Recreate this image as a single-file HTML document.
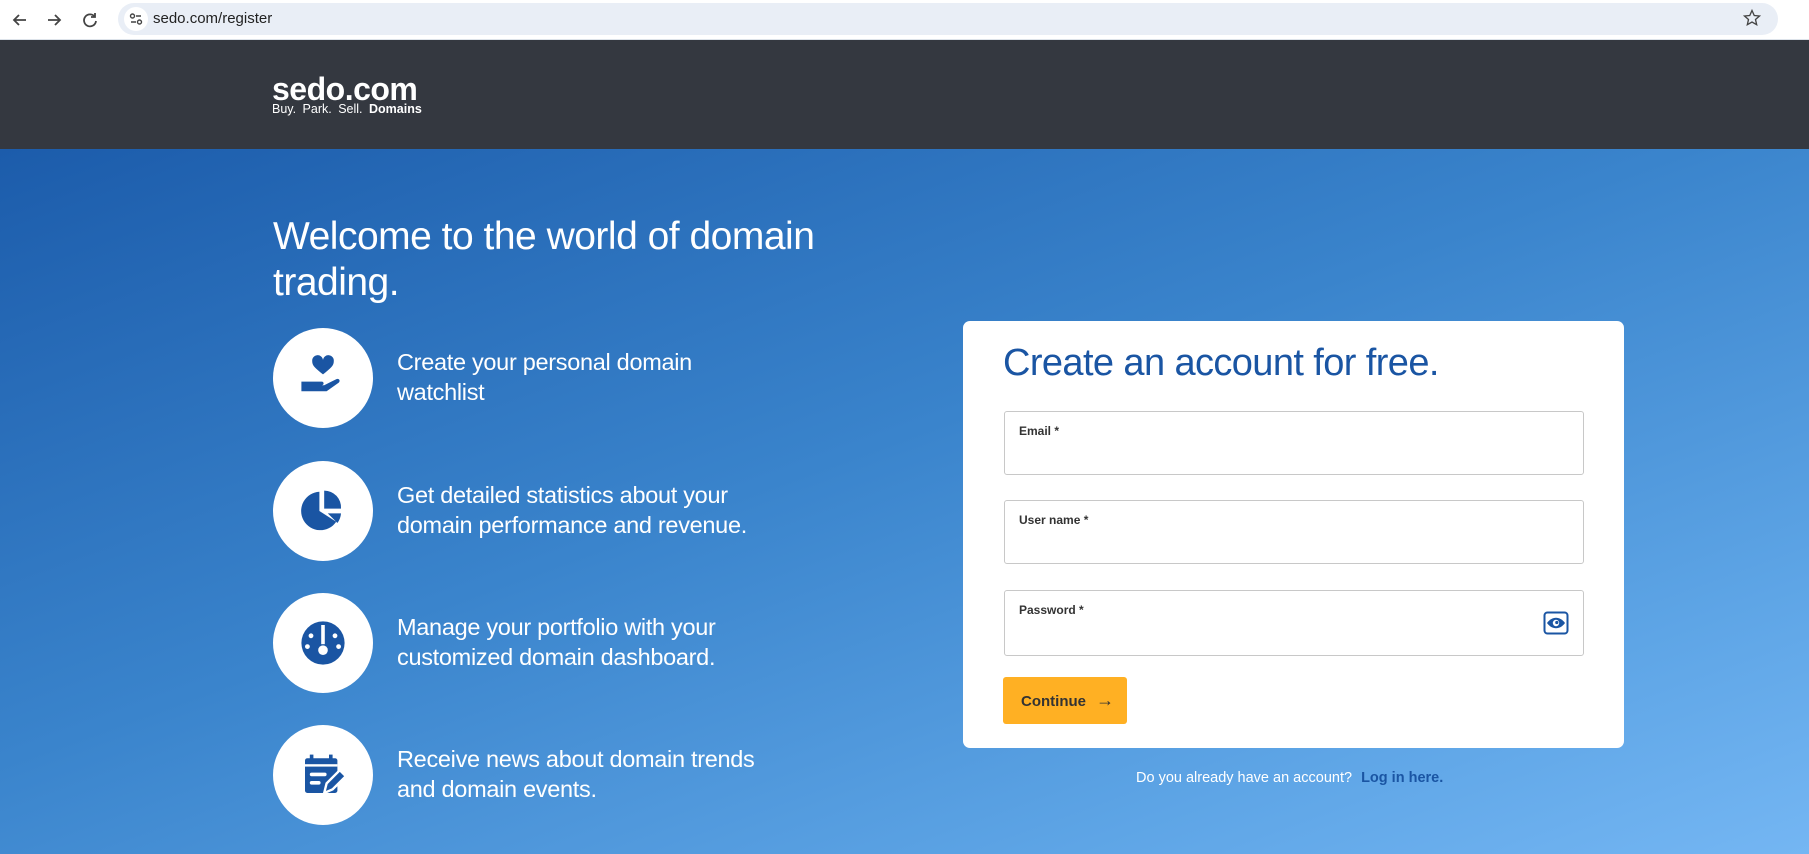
<!DOCTYPE html>
<html><head><meta charset="utf-8"><style>
*{box-sizing:border-box;margin:0;padding:0}
body{width:1809px;height:854px;overflow:hidden;font-family:"Liberation Sans",sans-serif;position:relative;background:#fff}
.chrome{position:absolute;left:0;top:0;width:1809px;height:40px;background:#fff;border-bottom:1px solid #dde3ea}
.pill{position:absolute;left:118px;top:3px;width:1660px;height:32px;border-radius:16px;background:#e9eef6}
.url{position:absolute;left:153px;top:10px;font-size:15px;color:#222}
.hdr{position:absolute;left:0;top:40px;width:1809px;height:109px;background:#343840}
.logo{position:absolute;left:272px;top:71px;color:#fff;font-weight:bold;font-size:32px;letter-spacing:-0.5px}
.tag{position:absolute;left:272px;top:102px;color:#fff;font-size:12.5px;word-spacing:3px}
.hero{position:absolute;left:0;top:149px;width:1809px;height:705px;background:linear-gradient(160deg,#1c5cab 0%,#3a84cc 45%,#5ea5e6 80%,#74b6f3 100%)}
h1{position:absolute;left:273px;top:214px;color:#fff;font-weight:normal;font-size:39px;line-height:46px;letter-spacing:-0.5px}
.circ{position:absolute;left:273px;width:100px;height:100px;border-radius:50%;background:#fff}
.circ svg{position:absolute;left:20px;top:20px}
.ft{position:absolute;left:397px;color:#fff;font-size:23.5px;line-height:30px;letter-spacing:-0.3px}
.card{position:absolute;left:963px;top:321px;width:661px;height:427px;background:#fff;border-radius:7px}
.ct{position:absolute;left:1003px;top:342px;color:#1a55a3;font-size:38px;letter-spacing:-0.6px}
.inp{position:absolute;left:1004px;width:580px;border:1px solid #c8c8c8;border-radius:3px;background:#fff}
.inp span{position:absolute;left:14px;top:12px;font-size:12px;font-weight:bold;color:#333}
.btn{position:absolute;left:1003px;top:677px;width:124px;height:47px;background:#ffb023;border-radius:3px;color:#333;font-weight:bold;font-size:15px;line-height:47px;padding-left:18px}
.foot{position:absolute;left:1136px;top:770px;color:#fff;font-size:14.5px}
.foot b{color:#1a55a3;margin-left:5px}
</style></head><body>
<div class="chrome">
<svg style="position:absolute;left:10px;top:10px" width="20" height="20" viewBox="0 0 20 20"><path d="M16 10H4M9 5l-5 5 5 5" stroke="#444" stroke-width="1.8" fill="none"/></svg>
<svg style="position:absolute;left:44px;top:10px" width="20" height="20" viewBox="0 0 20 20"><path d="M4 10h12M11 5l5 5-5 5" stroke="#444" stroke-width="1.8" fill="none"/></svg>
<svg style="position:absolute;left:80px;top:10px" width="20" height="20" viewBox="0 0 20 20"><path d="M15 7a6 6 0 1 0 1 4M15 3v4h-4" stroke="#444" stroke-width="1.8" fill="none"/></svg>
<div class="pill"></div>
<svg style="position:absolute;left:124px;top:7px" width="24" height="24" viewBox="0 0 24 24"><circle cx="12" cy="12" r="12" fill="#fff"/><circle cx="8.5" cy="9" r="2" fill="none" stroke="#444" stroke-width="1.4"/><path d="M12 9h5M7 15h5" stroke="#444" stroke-width="1.4"/><circle cx="15.5" cy="15" r="2" fill="none" stroke="#444" stroke-width="1.4"/></svg>
<div class="url">sedo.com/register</div>
<svg style="position:absolute;left:1742px;top:8px" width="20" height="20" viewBox="0 0 24 24"><path d="M12 3l2.7 6 6.3.6-4.8 4.2 1.4 6.2L12 16.8 6.4 20l1.4-6.2L3 9.6l6.3-.6z" fill="none" stroke="#444" stroke-width="1.6"/></svg>
</div>
<div class="hdr"></div>
<div class="logo">sedo.com</div>
<div class="tag">Buy. Park. Sell. <b>Domains</b></div>
<div class="hero"></div>
<h1>Welcome to the world of domain<br>trading.</h1>

<div class="circ" style="top:328px"><svg width="60" height="60" viewBox="0 0 50 50"><path d="M25 22c-6-5-9-7-9-11a4.5 4.5 0 0 1 9-1 4.5 4.5 0 0 1 9 1c0 4-3 6-9 11z" fill="#1a55a3"/><path d="M7 28h8l9 0c2 0 2 3 0 3h-6h8l10-5c2-1 4 1 2 3l-10 7H7z" fill="#1a55a3"/></svg></div>
<div class="ft" style="top:347px">Create your personal domain<br>watchlist</div>

<div class="circ" style="top:461px"><svg width="60" height="60" viewBox="0 0 50 50"><path d="M22 9a16 16 0 1 0 14 25L22 25z" fill="#1a55a3"/><path d="M26 8a14 14 0 0 1 14 15H26z" fill="#1a55a3"/><path d="M40 27a15 15 0 0 1-3 8L29 27z" fill="#1a55a3"/></svg></div>
<div class="ft" style="top:480px">Get detailed statistics about your<br>domain performance and revenue.</div>

<div class="circ" style="top:593px"><svg width="60" height="60" viewBox="0 0 50 50"><circle cx="25" cy="25" r="18" fill="#1a55a3"/><rect x="23.5" y="10" width="3" height="16" fill="#fff"/><circle cx="25" cy="31" r="4" fill="#fff"/><circle cx="15" cy="19" r="2" fill="#fff"/><circle cx="35" cy="19" r="2" fill="#fff"/><circle cx="12" cy="28" r="2" fill="#fff"/><circle cx="38" cy="28" r="2" fill="#fff"/></svg></div>
<div class="ft" style="top:612px">Manage your portfolio with your<br>customized domain dashboard.</div>

<div class="circ" style="top:725px"><svg width="60" height="60" viewBox="0 0 50 50"><rect x="10" y="11" width="27" height="29" rx="2" fill="#1a55a3"/><rect x="14" y="8" width="3" height="6" fill="#1a55a3"/><rect x="30" y="8" width="3" height="6" fill="#1a55a3"/><rect x="10" y="16" width="27" height="2" fill="#fff"/><rect x="14" y="23" width="14" height="3" rx="1.5" fill="#fff"/><rect x="14" y="30" width="9" height="3" rx="1.5" fill="#fff"/><path d="M26 40l2-8 11-11 5 5-11 11z" fill="#1a55a3" stroke="#fff" stroke-width="2"/></svg></div>
<div class="ft" style="top:744px">Receive news about domain trends<br>and domain events.</div>

<div class="card"></div>
<div class="ct">Create an account for free.</div>
<div class="inp" style="top:411px;height:64px"><span>Email *</span></div>
<div class="inp" style="top:500px;height:64px"><span>User name *</span></div>
<div class="inp" style="top:590px;height:66px"><span>Password *</span>
<svg style="position:absolute;left:538px;top:20px" width="26" height="24" viewBox="0 0 26 24"><rect x="1.5" y="1.5" width="23" height="21" rx="3" fill="none" stroke="#1a55a3" stroke-width="2"/><path d="M4 12c5-7 13-7 18 0-5 7-13 7-18 0z" fill="#1a55a3"/><circle cx="13" cy="12" r="3.2" fill="#fff"/><circle cx="13.8" cy="11.5" r="1.6" fill="#1a55a3"/></svg></div>
<div class="btn">Continue <span style="font-size:18px;margin-left:6px">&rarr;</span></div>
<div class="foot">Do you already have an account? <b>Log in here.</b></div>
</body></html>
